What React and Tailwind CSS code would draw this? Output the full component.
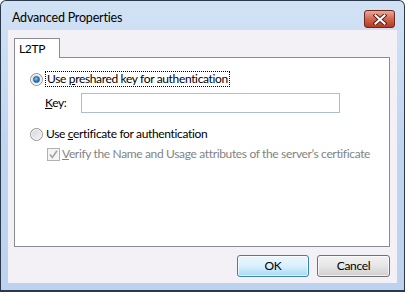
import React from "react";

const ui = { fontFamily: 'Lato, "Liberation Sans", sans-serif' };

function Radio({ checked }) {
  return (
    <div className="w-[13px] h-[13px] rounded-full border border-[#8e8f8f] bg-gradient-to-br from-[#d5d5d5] to-[#f6f6f6] flex items-center justify-center shrink-0">
      <div className="w-[11px] h-[11px] rounded-full border border-[#f4f4f4] flex items-center justify-center">
        {checked && (
          <div className="w-[7px] h-[7px] rounded-full bg-[radial-gradient(circle_at_40%_35%,#8fd1f7_0%,#2c8ad4_45%,#0b4f95_100%)] border border-[#1e5f99]" />
        )}
      </div>
    </div>
  );
}

function DisabledCheck() {
  return (
    <div className="w-[13px] h-[13px] border border-[#b1b1b1] bg-[#f4f4f4] flex items-center justify-center shrink-0">
      <svg width="11" height="11" viewBox="0 0 11 11">
        <path d="M2 5.5 L4.3 8.5 L9 1.8" fill="none" stroke="#a3a3a3" strokeWidth="1.6" />
      </svg>
    </div>
  );
}

export default function App() {
  return (
    <div className="w-[405px] h-[292px] bg-white text-[12px] tracking-[-0.35px] leading-none text-black whitespace-nowrap" style={ui}>
      <div className="h-full flex flex-col rounded-t-[6px] border border-b-2 border-[#2b3a4a] bg-gradient-to-b from-[#d2e2f5] via-[#bfd5f0] to-[#bcd2ee] px-[7px] pb-[7px]">
        {/* Title bar */}
        <div className="h-[29px] flex justify-between pl-[4px] pr-[2px]">
          <span className="pt-[11px] text-[12.5px] tracking-[-0.2px]">Advanced Properties</span>
          <div className="mt-[9px] w-[31px] h-[18px] rounded-[3px] border border-[#6a2a20] bg-gradient-to-b from-[#e9a99a] via-[#d0664f] to-[#b8371f] flex items-center justify-center">
            <svg width="14" height="11" viewBox="0 0 14 11">
              <path d="M2.5 1.5 L11.5 9.5 M11.5 1.5 L2.5 9.5" stroke="#5a2018" strokeWidth="4" strokeLinecap="square" />
              <path d="M2.5 1.5 L11.5 9.5 M11.5 1.5 L2.5 9.5" stroke="#ffffff" strokeWidth="2" strokeLinecap="square" />
            </svg>
          </div>
        </div>

        {/* Client area */}
        <div className="flex-1 bg-[#f3f1f6] pt-[8px] pl-[6px] pr-[7px] flex flex-col">
          <div className="flex">
            <div className="w-[46px] h-[20px] -mb-px relative z-10 bg-white border border-b-0 border-[#898c95] pl-[4px] pt-[4px]">
              L2TP
            </div>
          </div>
          <div className="h-[190px] bg-white border border-[#898c95] pt-[13px] pl-[15px] flex flex-col">
            <div className="h-[16px] flex items-center gap-[1px]">
              <Radio checked />
              <span className="ml-[1px] h-[16px] px-[1px] border border-dotted border-black flex items-center">
                <span>
                  Use <span className="underline">p</span>reshared key for authentication
                </span>
              </span>
            </div>
            <div className="mt-[6px] h-[20px] flex items-center pl-[15px]">
              <span className="w-[36px]">
                <span className="underline">K</span>ey:
              </span>
              <div className="w-[259px] h-[20px] border border-[#a9bfd6] bg-white" />
            </div>
            <div className="mt-[13px] h-[16px] flex items-center gap-[2px]">
              <Radio />
              <span className="ml-[1px]">
                Use <span className="underline">c</span>ertificate for authentication
              </span>
            </div>
            <div className="mt-[4px] h-[16px] flex items-center gap-[2px] pl-[17px] text-[#838383]">
              <DisabledCheck />
              <span>
                <span className="underline">V</span>erify the Name and Usage attributes of the server’s certificate
              </span>
            </div>
          </div>

          <div className="mt-[8px] flex justify-end gap-[8px]">
            <button className="w-[72px] h-[22px] rounded-[3px] border border-[#3c7fb1] bg-gradient-to-b from-[#eaf6fd] via-[#d9f0fc] to-[#a7d9f5] shadow-[inset_0_0_0_1px_#ffffffaa]">
              OK
            </button>
            <button className="w-[73px] h-[22px] rounded-[3px] border border-[#707070] bg-gradient-to-b from-[#f2f2f2] via-[#e6e6e6] to-[#cfcfcf] shadow-[inset_0_0_0_1px_#ffffffaa]">
              Cancel
            </button>
          </div>
        </div>
      </div>
    </div>
  );
}
